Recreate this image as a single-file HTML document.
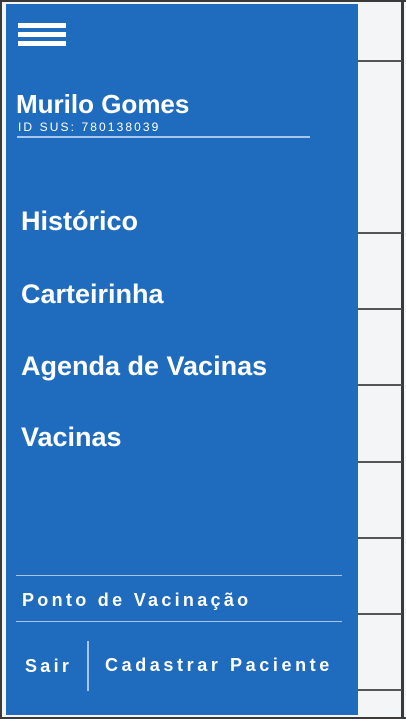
<!DOCTYPE html>
<html><head><meta charset="utf-8"><style>
*{margin:0;padding:0;box-sizing:border-box}
body{width:406px;height:719px;background:#f4f5f7;position:relative;overflow:hidden;font-family:"Liberation Sans",sans-serif}
.frame{position:absolute;left:0;top:0;width:406px;height:719px;border:2px solid #3a3a3a;border-right:none}
.rb{position:absolute;left:401px;top:0;width:3px;height:719px;background:#3a3a3a}
.hl{position:absolute;left:358px;width:44px;height:2px;background:#555}
.panel{position:absolute;left:6px;top:4px;width:352px;height:711px;background:#1f6bbd;color:#fff}
.ham{position:absolute;left:12px;height:5px;width:48px;background:#fff}
.t{position:absolute;white-space:nowrap}
.menu{font-weight:bold;font-size:27px;left:15px}
.line{position:absolute;height:1px;background:#a9c6ea}
.b{font-size:18px;font-weight:bold;letter-spacing:3.3px}
</style></head><body>
<div class="frame"></div>
<div class="rb"></div>
<div class="hl" style="top:60px"></div>
<div class="hl" style="top:232px"></div>
<div class="hl" style="top:308px"></div>
<div class="hl" style="top:384px"></div>
<div class="hl" style="top:461px"></div>
<div class="hl" style="top:537px"></div>
<div class="hl" style="top:613px"></div>
<div class="hl" style="top:689px"></div>
<div class="panel">
<div class="ham" style="top:19px"></div>
<div class="ham" style="top:28px"></div>
<div class="ham" style="top:37px"></div>
<div class="t" style="left:10px;top:85px;font-weight:bold;font-size:26px">Murilo Gomes</div>
<div class="t" style="left:12px;top:116px;font-size:12px;letter-spacing:2.1px">ID SUS: 780138039</div>
<div class="line" style="left:11px;top:132px;width:293px;height:2px"></div>
<div class="t menu" style="top:202px">Histórico</div>
<div class="t menu" style="top:275px">Carteirinha</div>
<div class="t menu" style="top:347px">Agenda de Vacinas</div>
<div class="t menu" style="top:418px">Vacinas</div>
<div class="line" style="left:10px;top:571px;width:326px"></div>
<div class="t b" style="left:16px;top:586px">Ponto de Vacinação</div>
<div class="line" style="left:10px;top:617px;width:326px"></div>
<div class="t b" style="left:19px;top:652px">Sair</div>
<div class="line" style="left:81px;top:637px;width:2px;height:50px"></div>
<div class="t b" style="left:99px;top:651px;letter-spacing:3.6px">Cadastrar Paciente</div>
</div>
</body></html>
